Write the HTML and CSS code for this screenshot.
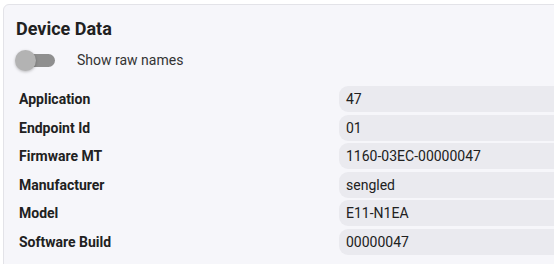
FILE: index.html
```html
<!DOCTYPE html>
<html lang="en">
<head>
    <meta charset="UTF-8">
    <meta name="viewport" content="width=device-width, initial-scale=1.0">
    <title>Device Data</title>
    <link rel="stylesheet" href="styles.css">
</head>
<body>

    <div class="card">
        <h2>Device Data</h2>

        <!-- Raw names switch -->
        <div class="switch-row">
            <span class="switch"><span class="thumb"></span></span>
            <span class="switch-label">Show raw names</span>
        </div>

        <!-- Attribute list -->
        <div class="data-list">
            <div class="data-name">Application</div>
            <div class="data-value">47</div>
            <div class="data-name">Endpoint Id</div>
            <div class="data-value">01</div>
            <div class="data-name">Firmware MT</div>
            <div class="data-value">1160-03EC-00000047</div>
            <div class="data-name">Manufacturer</div>
            <div class="data-value">sengled</div>
            <div class="data-name">Model</div>
            <div class="data-value">E11-N1EA</div>
            <div class="data-name">Software Build</div>
            <div class="data-value">00000047</div>
        </div>
    </div>

</body>
</html>
```

FILE: styles.css
```css
html, body {
    height: 100%;
    overflow: hidden;
}
body {
    font-family: Roboto, "Liberation Sans", sans-serif;
    margin: 0;
    background: #fff;
    color: #212121;
}
.card {
    margin: 4px -20px 0 3px;
    height: 280px;
    background: #f6f6fa;
    border: 1px solid #e3e3e8;
    border-radius: 6px;
    padding: 12px 12px 0 12px;
    box-sizing: border-box;
}
h2 {
    margin: 0;
    font-size: 18px;
    font-weight: 700;
    line-height: 24px;
    color: #212121;
}
.switch-row {
    display: flex;
    align-items: center;
    height: 24px;
    margin-top: 7px;
}
.switch {
    position: relative;
    width: 38px;
    height: 13px;
    margin-left: 1px;
    border-radius: 7px;
    background: #8f8f8f;
}
.thumb {
    position: absolute;
    left: -2px;
    top: -4px;
    width: 21px;
    height: 21px;
    border-radius: 50%;
    background: #b3b3b3;
    box-shadow: 0 1px 3px rgba(0, 0, 0, 0.25);
}
.switch-label {
    margin-left: 22px;
    font-size: 14px;
    color: #333;
}
.data-list {
    display: grid;
    grid-template-columns: 320px 1fr;
    row-gap: 2.6px;
    margin-top: 14px;
    margin-left: 3px;
}
.data-name {
    font-size: 14px;
    font-weight: 700;
    line-height: 26px;
    color: #212121;
}
.data-value {
    font-size: 14px;
    line-height: 26px;
    padding-left: 7px;
    background: #eaeaef;
    border-radius: 9px 0 0 9px;
    color: #212121;
}
```
